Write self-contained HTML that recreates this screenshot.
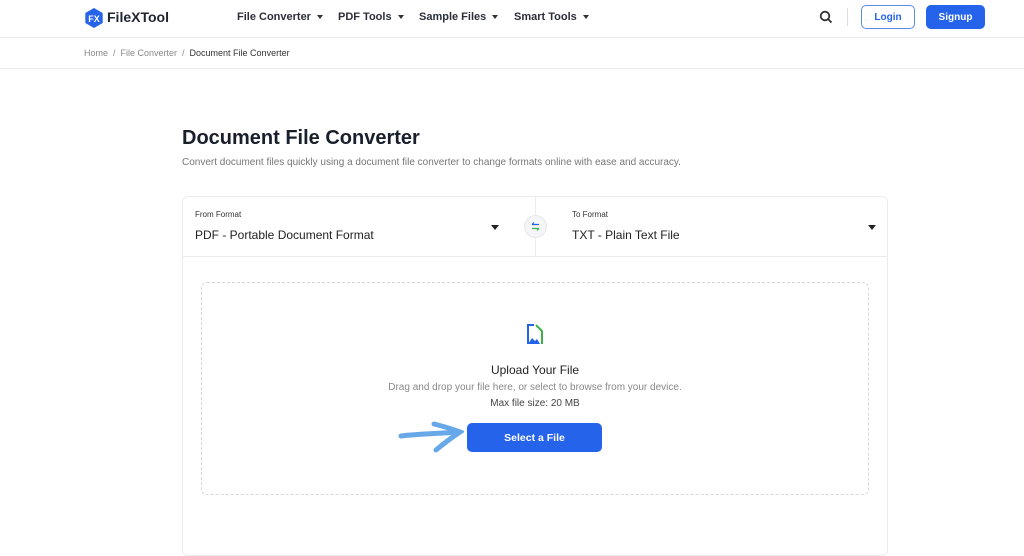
<!DOCTYPE html>
<html><head><meta charset="utf-8"><style>
*{box-sizing:border-box;margin:0;padding:0}
body{width:1024px;height:512px;overflow:hidden;background:#fff;font-family:"Liberation Sans",sans-serif;color:#1f2430;position:relative}
.a{position:absolute}
.nav{font-size:11px;font-weight:bold;color:#2a2f3a}
.nav span{position:absolute;top:11px}
.car{display:inline-block;width:0;height:0;border-left:3.5px solid transparent;border-right:3.5px solid transparent;border-top:4px solid #333;margin-left:6px;vertical-align:middle}
</style></head><body>
<div class="a" style="left:0;top:0;width:1024px;height:38px;border-bottom:1px solid #ececec"></div>
<svg class="a" style="left:84px;top:8px" width="20" height="20" viewBox="0 0 20 20"><polygon points="10,0 18.7,5 18.7,15 10,20 1.3,15 1.3,5" fill="#2563eb"/><text x="10" y="14" font-size="9" font-family="Liberation Sans" fill="#fff" text-anchor="middle" font-weight="bold">FX</text></svg>
<div class="a" style="left:107px;top:9px;font-size:14px;font-weight:bold;color:#1f2430">FileXTool</div>
<div class="nav">
<span style="left:237px">File Converter<i class="car"></i></span>
<span style="left:338px">PDF Tools<i class="car"></i></span>
<span style="left:419px">Sample Files<i class="car"></i></span>
<span style="left:514px">Smart Tools<i class="car"></i></span>
</div>
<svg class="a" style="left:819px;top:10px" width="14" height="14" viewBox="0 0 14 14"><circle cx="6" cy="6" r="4.3" fill="none" stroke="#333" stroke-width="1.8"/><line x1="9.2" y1="9.2" x2="12.5" y2="12.5" stroke="#333" stroke-width="1.8"/></svg>
<div class="a" style="left:847px;top:8px;width:1px;height:18px;background:#ddd"></div>
<div class="a" style="left:861px;top:5px;width:54px;height:24px;border:1px solid #5b8de8;border-radius:5px;font-size:10px;font-weight:bold;color:#2563eb;text-align:center;line-height:23px">Login</div>
<div class="a" style="left:926px;top:5px;width:59px;height:24px;background:#2563eb;border-radius:5px;font-size:10px;font-weight:bold;color:#fff;text-align:center;line-height:25px">Signup</div>
<div class="a" style="left:0;top:68px;width:1024px;height:1px;background:#ececec"></div>
<div class="a" style="left:84px;top:48px;font-size:9px;color:#888">Home &nbsp;/&nbsp; File Converter &nbsp;/&nbsp; <span style="color:#333">Document File Converter</span></div>
<div class="a" style="left:182px;top:127px;font-size:20px;font-weight:bold;color:#1a1f2c">Document File Converter</div>
<div class="a" style="left:182px;top:157px;font-size:10px;color:#777">Convert document files quickly using a document file converter to change formats online with ease and accuracy.</div>
<div class="a" style="left:182px;top:196px;width:706px;height:360px;border:1px solid #ececec;border-radius:6px"></div>
<div class="a" style="left:182px;top:256px;width:706px;height:1px;background:#ececec"></div>
<div class="a" style="left:535px;top:196px;width:1px;height:60px;background:#ececec"></div>
<div class="a" style="left:195px;top:210px;font-size:8px;color:#333">From Format</div>
<div class="a" style="left:195px;top:228px;font-size:12px;color:#222">PDF - Portable Document Format</div>
<div class="a" style="left:491px;top:225px;border-left:4px solid transparent;border-right:4px solid transparent;border-top:5px solid #222"></div>
<div class="a" style="left:572px;top:210px;font-size:8px;color:#333">To Format</div>
<div class="a" style="left:572px;top:228px;font-size:12px;color:#222">TXT - Plain Text File</div>
<div class="a" style="left:868px;top:225px;border-left:4px solid transparent;border-right:4px solid transparent;border-top:5px solid #222"></div>
<div class="a" style="left:524px;top:215px;width:23px;height:23px;border-radius:50%;background:#f4f5f7;border:1px solid #e8e8e8"></div>
<svg class="a" style="left:530px;top:221px" width="11" height="11" viewBox="0 0 11 11"><path d="M2 3.5h7M2 3.5l2-2" stroke="#2563eb" stroke-width="1.2" fill="none"/><path d="M9 7.5H2M9 7.5l-2 2" stroke="#3cb34a" stroke-width="1.2" fill="none"/></svg>
<div class="a" style="left:201px;top:282px;width:668px;height:213px;border:1px dashed #d8d8d8;border-radius:6px"></div>
<svg class="a" style="left:524px;top:323px" width="22" height="24" viewBox="0 0 22 24"><path d="M10 2H4v19" stroke="#2563eb" stroke-width="2" fill="none"/><path d="M12 2l6 6v13" stroke="#3cb34a" stroke-width="2" fill="none"/><path d="M4 21l4-6 3 3 2-2 3 5z" fill="#2563eb"/></svg>
<div class="a" style="left:0;width:1070px;top:363px;font-size:12px;color:#222;text-align:center">Upload Your File</div>
<div class="a" style="left:0;width:1070px;top:382px;font-size:10px;color:#888;text-align:center">Drag and drop your file here, or select to browse from your device.</div>
<div class="a" style="left:0;width:1070px;top:398px;font-size:10px;color:#444;text-align:center">Max file size: 20 MB</div>
<div class="a" style="left:467px;top:423px;width:135px;height:29px;background:#2563eb;border-radius:5px;color:#fff;font-size:10.5px;font-weight:bold;text-align:center;line-height:30px">Select a File</div>
<svg class="a" style="left:398px;top:420px" width="66" height="34" viewBox="0 0 66 34"><path d="M3 16C18 14 34 14 60 12" stroke="#67a8e8" stroke-width="5" fill="none" stroke-linecap="round"/><path d="M36 4Q52 8 62 12Q50 20 38 30" stroke="#67a8e8" stroke-width="5" fill="none" stroke-linecap="round"/></svg>
</body></html>
